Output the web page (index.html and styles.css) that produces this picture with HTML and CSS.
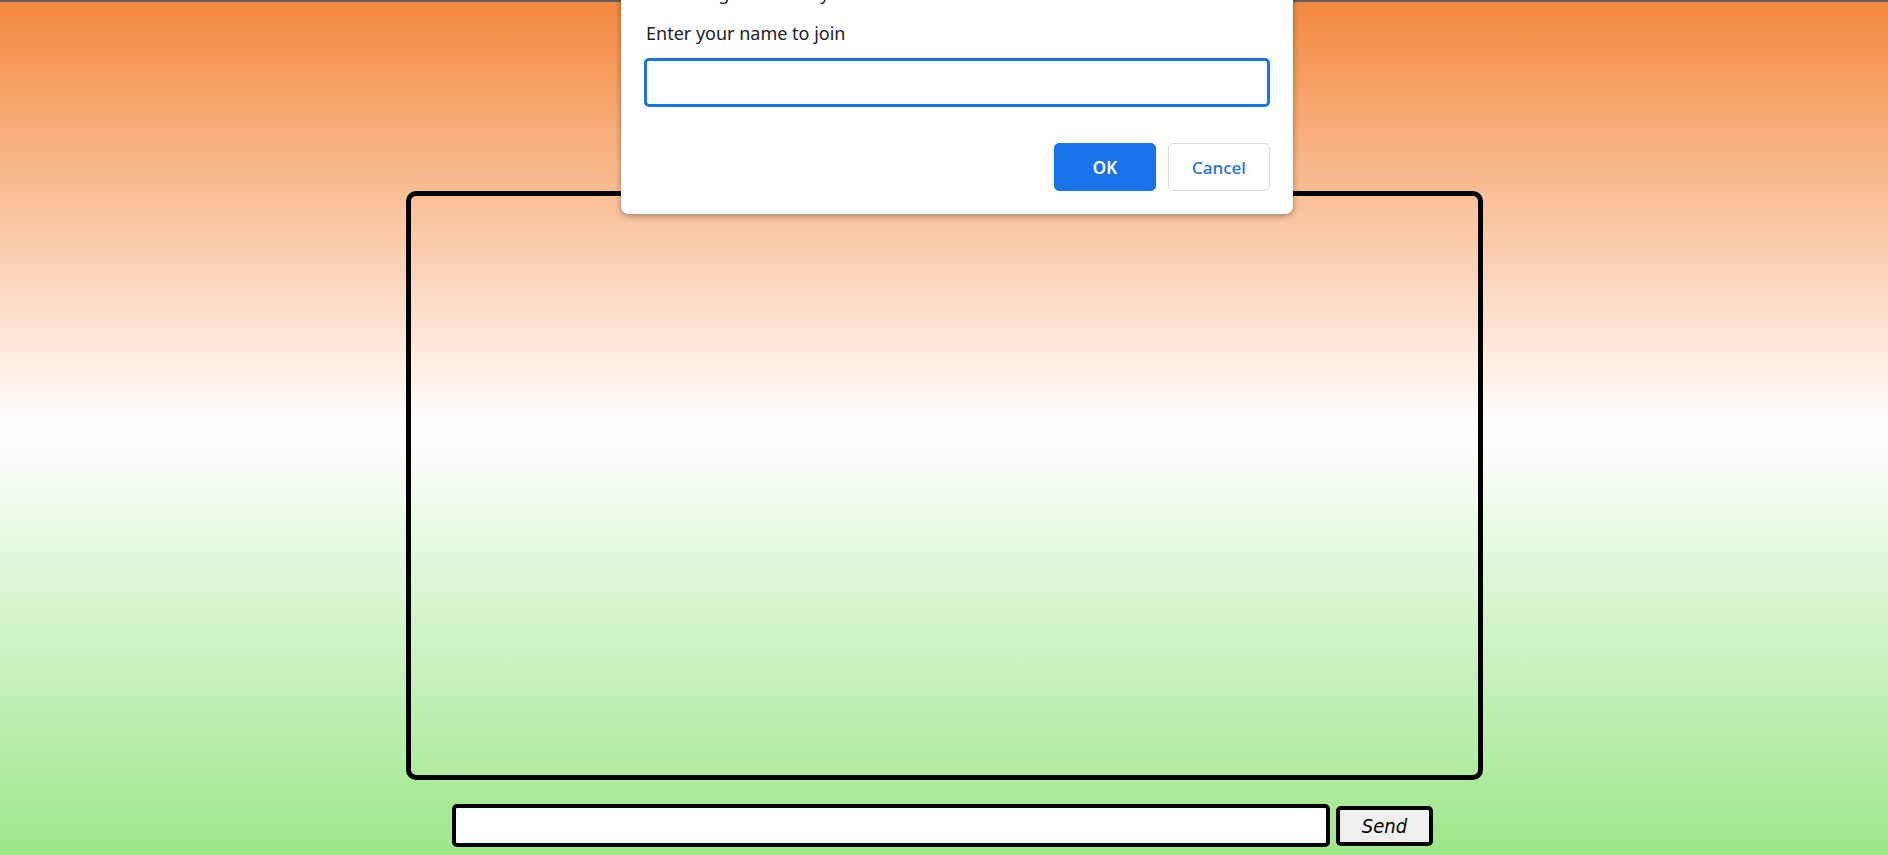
FILE: index.html
```html
<!DOCTYPE html>
<html lang="en">
<head>
<meta charset="utf-8">
<title>Chat</title>
<link rel="stylesheet" href="styles.css">
</head>
<body>
<div class="topbar"></div>
<main class="page">
  <div class="chat-box"></div>
  <form class="send-row">
    <input class="msg-input" type="text">
    <button class="send-btn" type="button">Send</button>
  </form>
</main>

<div class="dialog">
  <div class="dialog-title">chatbox.glitch.me says</div>
  <div class="dialog-msg">Enter your name to join</div>
  <div class="dialog-input"></div>
  <div class="dialog-actions">
    <button class="btn btn-ok" type="button">OK</button>
    <button class="btn btn-cancel" type="button">Cancel</button>
  </div>
</div>
</body>
</html>
```

FILE: styles.css
```css
html, body {
  margin: 0;
  padding: 0;
  height: 100%;
}

body {
  background: linear-gradient(to bottom, #f4883d 0%, #ffffff 50%, #9de78a 100%);
  font-family: "Noto Sans", "Open Sans", sans-serif;
  overflow: hidden;
  position: relative;
}

.topbar {
  position: absolute;
  left: 0;
  right: 0;
  top: 0;
  height: 2px;
  background: #5f5f5f;
}

.page {
  display: flex;
  flex-direction: column;
  align-items: center;
  padding-top: 191px;
}

.chat-box {
  width: 1077px;
  height: 589px;
  box-sizing: border-box;
  border: 5px solid #000;
  border-radius: 10px;
}

.send-row {
  display: flex;
  align-items: center;
  gap: 6px;
  margin: 24px 0 0 -3px;
}

.msg-input {
  width: 878px;
  height: 43px;
  box-sizing: border-box;
  border: 4px solid #000;
  border-radius: 5px;
  background: #fff;
  margin: 0;
  padding: 0 8px;
}

.send-btn {
  width: 97px;
  height: 40px;
  box-sizing: border-box;
  border: 4px solid #000;
  border-radius: 5px;
  background: #efefef;
  font-family: "DejaVu Sans Condensed", "DejaVu Sans", sans-serif;
  font-style: italic;
  font-size: 20px;
  color: #000;
  margin: 0;
  padding: 0;
}

.dialog {
  position: absolute;
  top: -43px;
  left: 621px;
  width: 672px;
  box-sizing: border-box;
  padding: 24px 23px 23px 25px;
  background: #fff;
  border-radius: 8px;
  box-shadow: 0 2px 6px rgba(0, 0, 0, 0.35);
  display: flex;
  flex-direction: column;
}

.dialog-title {
  font-size: 18px;
  line-height: 24px;
  color: #202124;
  margin-bottom: 16px;
}

.dialog-msg {
  font-size: 18px;
  line-height: 24px;
  color: #202124;
  margin-bottom: 13px;
}

.dialog-input {
  height: 49px;
  box-sizing: border-box;
  border: 3px solid #1a73e8;
  border-radius: 5px;
  margin-left: -2px;
}

.dialog-actions {
  display: flex;
  justify-content: flex-end;
  gap: 12px;
  margin-top: 36px;
}

.btn {
  width: 102px;
  height: 48px;
  box-sizing: border-box;
  border-radius: 5px;
  font-family: "Noto Sans", "Open Sans", sans-serif;
  font-size: 17px;
  padding: 0;
}

.btn-ok {
  background: #1a73e8;
  border: 1px solid #1a73e8;
  color: #fff;
  font-weight: 600;
}

.btn-cancel {
  background: #fff;
  border: 1px solid #dadce0;
  color: #1a73e8;
  font-weight: 500;
}
```
